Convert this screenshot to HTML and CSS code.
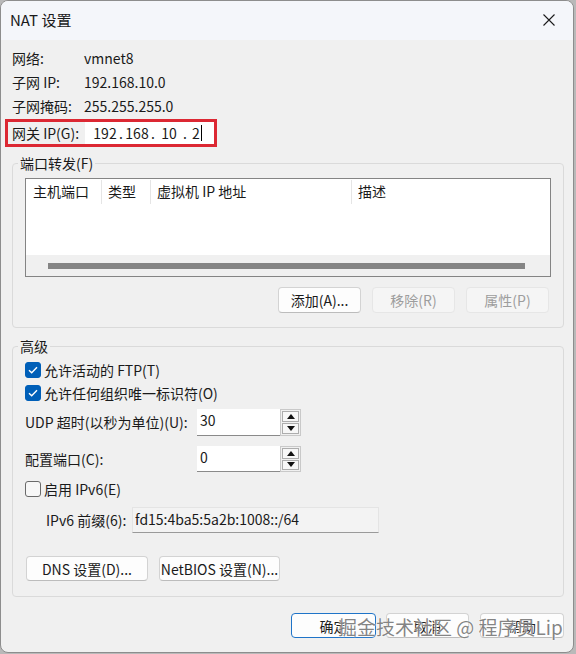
FILE: index.html
```html
<!DOCTYPE html>
<html lang="zh-CN">
<head>
    <meta charset="UTF-8">
    <meta name="viewport" content="width=device-width, initial-scale=1.0">
    <title>NAT 设置</title>
    <link rel="stylesheet" href="styles.css">
</head>
<body>
    <div class="window">
        <!-- 标题栏 -->
        <div class="titlebar">
            <span class="title">NAT 设置</span>
            <span class="close">
                <svg width="12" height="12" viewBox="0 0 12 12"><path d="M0.5 0.5 L11.5 11.5 M11.5 0.5 L0.5 11.5" stroke="#1b1b1b" stroke-width="1.1" fill="none"/></svg>
            </span>
        </div>

        <div class="content">
            <div class="info">
                <span>网络:</span><span>vmnet8</span>
                <span>子网 IP:</span><span>192.168.10.0</span>
                <span>子网掩码:</span><span>255.255.255.0</span>
            </div>

            <!-- 网关 -->
            <div class="gateway">
                <span class="gw-label">网关 IP(G):</span>
                <div class="ip-input">
                    <span class="seg">192</span><span class="dot">.</span>
                    <span class="seg">168</span><span class="dot">.</span>
                    <span class="seg">10</span><span class="dot">.</span>
                    <span class="seg last">2<span class="caret"></span></span>
                </div>
            </div>

            <!-- 端口转发 -->
            <fieldset class="group ports">
                <legend>端口转发(F)</legend>
                <div class="listview">
                    <div class="lv-header">
                        <div class="col c1">主机端口</div>
                        <div class="col c2">类型</div>
                        <div class="col c3">虚拟机 IP 地址</div>
                        <div class="col c4">描述</div>
                    </div>
                    <div class="lv-body"></div>
                    <div class="hscroll"><div class="thumb"></div></div>
                </div>
                <div class="btn-row">
                    <button class="btn">添加(A)...</button>
                    <button class="btn" disabled>移除(R)</button>
                    <button class="btn" disabled>属性(P)</button>
                </div>
            </fieldset>

            <!-- 高级 -->
            <fieldset class="group adv">
                <legend>高级</legend>
                <div class="check">
                    <span class="box checked"><svg width="10" height="8" viewBox="0 0 10 8"><path d="M1 4.2 L3.7 6.8 L9 1.2" stroke="#fff" stroke-width="1.4" fill="none"/></svg></span>
                    允许活动的 FTP(T)
                </div>
                <div class="check">
                    <span class="box checked"><svg width="10" height="8" viewBox="0 0 10 8"><path d="M1 4.2 L3.7 6.8 L9 1.2" stroke="#fff" stroke-width="1.4" fill="none"/></svg></span>
                    允许任何组织唯一标识符(O)
                </div>

                <div class="field-row udp">
                    <span class="field-label">UDP 超时(以秒为单位)(U):</span>
                    <span class="textbox">30</span>
                    <span class="spin">
                        <span class="spin-btn"><svg width="8" height="5" viewBox="0 0 8 5"><path d="M0 5 L4 0 L8 5 Z" fill="#111"/></svg></span>
                        <span class="spin-btn"><svg width="8" height="5" viewBox="0 0 8 5"><path d="M0 0 L8 0 L4 5 Z" fill="#111"/></svg></span>
                    </span>
                </div>
                <div class="field-row port">
                    <span class="field-label">配置端口(C):</span>
                    <span class="textbox">0</span>
                    <span class="spin">
                        <span class="spin-btn"><svg width="8" height="5" viewBox="0 0 8 5"><path d="M0 5 L4 0 L8 5 Z" fill="#111"/></svg></span>
                        <span class="spin-btn"><svg width="8" height="5" viewBox="0 0 8 5"><path d="M0 0 L8 0 L4 5 Z" fill="#111"/></svg></span>
                    </span>
                </div>

                <div class="check ipv6">
                    <span class="box"></span>
                    启用 IPv6(E)
                </div>
                <div class="prefix-row">
                    <span class="prefix-label">IPv6 前缀(6):</span>
                    <span class="prefix-box">fd15:4ba5:5a2b:1008::/64</span>
                </div>

                <div class="btn-row left">
                    <button class="btn dns">DNS 设置(D)...</button>
                    <button class="btn netbios">NetBIOS 设置(N)...</button>
                </div>
            </fieldset>

            <!-- 底部按钮 -->
            <div class="footer">
                <button class="btn default">确定</button>
                <button class="btn cancel">取消</button>
                <button class="btn help">帮助</button>
            </div>
        </div>

        <div class="watermark">掘金技术社区 @ 程序员Lip</div>
    </div>
</body>
</html>
```

FILE: styles.css
```css
body {
    margin: 0;
    padding: 0;
    background-color: #b9b9b9;
    font-family: "Noto Sans CJK SC", "Noto Sans", sans-serif;
    font-size: 14px;
    color: #1a1a1a;
}

.window {
    position: relative;
    width: 574px;
    height: 653px;
    box-sizing: border-box;
    border: 1px solid #8d8d8d;
    border-radius: 8px;
    overflow: hidden;
    background-color: #f0f0f0;
}

.titlebar {
    height: 39px;
    background-color: #f4f6fa;
    display: flex;
    align-items: center;
    justify-content: space-between;
    padding: 0 0 0 9px;
}

.title {
    font-size: 15px;
    line-height: 20px;
    margin-top: -2px;
}

.close {
    width: 46px;
    height: 39px;
    display: flex;
    align-items: center;
    justify-content: center;
    margin-right: 1px;
    margin-top: -2px;
}

.content {
    padding: 6px 9px 0 11px;
}

.info {
    display: grid;
    grid-template-columns: 72px auto;
    grid-auto-rows: 24px;
    line-height: 24px;
}

/* 网关 - 红框 */
.gateway {
    margin: 1px 0 0 -7px;
    width: 212px;
    height: 28px;
    box-sizing: border-box;
    border: 3px solid #dc2833;
    display: flex;
    align-items: stretch;
}

.gw-label {
    width: 73px;
    padding-left: 4px;
    line-height: 22px;
}

.ip-input {
    flex: 1;
    background-color: #fff;
    display: flex;
    align-items: center;
    padding-left: 6px;
    line-height: 22px;
}

.seg {
    width: 28px;
    text-align: center;
}

.seg.last {
    width: 20px;
    display: flex;
    align-items: center;
    justify-content: center;
}

.dot {
    width: 4px;
    text-align: center;
}

.caret {
    display: inline-block;
    width: 1px;
    height: 16px;
    background-color: #000;
    margin-left: 1px;
}

/* 分组框 */
.group {
    margin: 6px 0 0 0;
    padding: 0 12px 14px 12px;
    border: 1px solid #dadada;
    border-radius: 4px;
    min-width: 0;
}

.group legend {
    margin-left: -7px;
    padding: 0 2px;
    line-height: 20px;
}

.listview {
    margin-top: 5px;
    height: 99px;
    box-sizing: border-box;
    border: 1px solid #848484;
    background-color: #fff;
    display: flex;
    flex-direction: column;
}

.lv-header {
    display: flex;
    height: 26px;
}

.col {
    line-height: 22px;
    height: 24px;
    margin-top: 1px;
    box-sizing: border-box;
    border-right: 1px solid #e5e5e5;
}

.c1 { width: 76px; padding-left: 7px; }
.c2 { width: 49px; padding-left: 6px; }
.c3 { width: 201px; padding-left: 6px; }
.c4 { flex: 1; padding-left: 6px; border-right: none; }

.lv-body {
    flex: 1;
}

.hscroll {
    height: 21px;
    background-color: #f0f0f0;
    display: flex;
    align-items: center;
    padding-left: 22px;
}

.thumb {
    width: 477px;
    height: 6px;
    background-color: #858585;
}

.btn-row {
    display: flex;
    justify-content: flex-end;
    gap: 11px;
    margin-top: 10px;
    padding-right: 2px;
}

.btn {
    font-family: "Noto Sans CJK SC", "Noto Sans", sans-serif;
    font-size: 14px;
    color: #1a1a1a;
    width: 83px;
    height: 26px;
    padding: 0;
    background-color: #fdfdfd;
    border: 1px solid #d3d3d3;
    border-bottom-color: #bcbcbc;
    border-radius: 4px;
    line-height: 22px;
}

.btn:disabled {
    background-color: #f5f5f5;
    border-color: #e6e6e6;
    color: #9d9d9d;
}

/* 高级 */
.adv {
    margin-top: 8px;
    padding-bottom: 15px;
}

.check {
    display: flex;
    align-items: center;
    height: 23px;
}

.adv legend + .check {
    margin-top: 2px;
}

.box {
    width: 16px;
    height: 16px;
    box-sizing: border-box;
    border-radius: 3px;
    border: 1px solid #6a6a6a;
    background-color: #f7f7f7;
    margin-right: 3px;
    display: flex;
    align-items: center;
    justify-content: center;
}

.box.checked {
    background-color: #005fb8;
    border-color: #005fb8;
}

.field-row {
    display: flex;
    align-items: stretch;
    height: 27px;
}

.field-row.udp {
    margin-top: 5px;
}

.field-row.port {
    margin-top: 10px;
    height: 26px;
}

.field-label {
    width: 172px;
    line-height: 27px;
}

.textbox {
    width: 83px;
    box-sizing: border-box;
    background-color: #fff;
    border-bottom: 1px solid #8a8a8a;
    padding-left: 3px;
    line-height: 22px;
}

.spin {
    width: 21px;
    box-sizing: border-box;
    border: 1px solid #c9c9c9;
    background-color: #f0f0f0;
    display: flex;
    flex-direction: column;
    justify-content: center;
    gap: 1px;
    padding: 1px;
}

.spin-btn {
    flex: 1;
    background-color: #f7f7f7;
    border: 1px solid #adadad;
    display: flex;
    align-items: center;
    justify-content: center;
}

.check.ipv6 {
    margin-top: 5px;
}

.prefix-row {
    display: flex;
    align-items: stretch;
    height: 26px;
    margin-top: 7px;
    padding-left: 21px;
}

.prefix-label {
    width: 86px;
    line-height: 26px;
}

.prefix-box {
    width: 247px;
    box-sizing: border-box;
    background-color: #f3f3f3;
    border: 1px solid #e4e4e4;
    border-bottom-color: #9a9a9a;
    padding-left: 2px;
    line-height: 22px;
}

.btn-row.left {
    justify-content: flex-start;
    margin-top: 23px;
    margin-left: 1px;
    padding-right: 0;
}

.btn.dns {
    width: 122px;
    height: 25px;
}

.btn.netbios {
    width: 121px;
    height: 25px;
}

.footer {
    display: flex;
    justify-content: flex-end;
    gap: 10px;
    margin-top: 16px;
    padding-right: 0;
}

.footer .btn {
    height: 25px;
}

.btn.default {
    width: 85px;
    border: 1px solid #1f74c8;
    margin-right: 0;
}

.btn.help {
    width: 84px;
    margin-left: 1px;
}

.watermark {
    position: absolute;
    left: 337px;
    top: 613px;
    font-size: 19px;
    line-height: 26px;
    color: rgba(110, 110, 110, 0.85);
    text-shadow: 0 0 2px #fff, 0 0 1px #fff;
    white-space: nowrap;
    font-family: "Noto Sans CJK SC", "Noto Sans", sans-serif;
}
```
